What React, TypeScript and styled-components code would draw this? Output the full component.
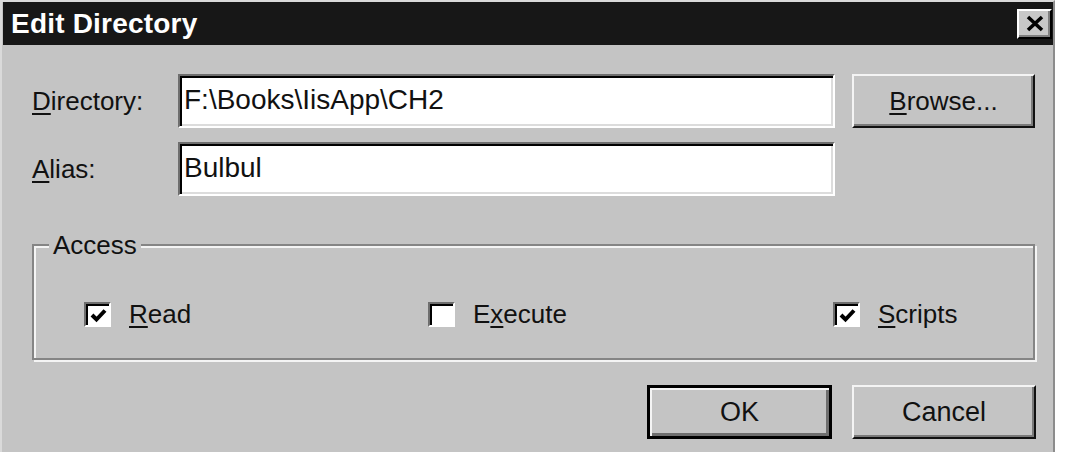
import styled, { createGlobalStyle } from "styled-components";

const GlobalStyle = createGlobalStyle`
  html, body {
    margin: 0;
    padding: 0;
    background: #ffffff;
  }
  body {
    font-family: "Liberation Sans", Arial, sans-serif;
  }
`;

const Dialog = styled.div`
  width: 1055px;
  height: 452px;
  box-sizing: border-box;
  background: #c4c4c4;
  border-top: 2px solid #dadada;
  border-left: 2px solid #dadada;
  border-right: 2px solid #8c8c8c;
  overflow: hidden;
  display: flex;
  flex-direction: column;
`;

const TitleBar = styled.div`
  height: 43px;
  flex: none;
  background: #171717;
  display: flex;
  align-items: center;
  justify-content: space-between;
  padding: 0 1px 0 8px;
  margin-left: 1px;
`;

const Title = styled.span`
  color: #ffffff;
  font-weight: bold;
  font-size: 28px;
  letter-spacing: 0.2px;
`;

const CloseButton = styled.button`
  width: 35px;
  height: 30px;
  padding: 0;
  box-sizing: border-box;
  background: #c8c8c8;
  border: 2px solid;
  border-color: #ffffff #000000 #000000 #ffffff;
  box-shadow: inset -2px -2px #808080;
  display: flex;
  align-items: center;
  justify-content: center;
`;

const Body = styled.div`
  padding: 29px 18px 0 28px;
  display: flex;
  flex-direction: column;
`;

const Form = styled.div`
  display: grid;
  row-gap: 14px;
`;

const FieldRow = styled.div`
  display: grid;
  grid-template-columns: 131px 657px 183px;
  column-gap: 17px;
  align-items: center;
  height: 54px;
`;

const Label = styled.label`
  font-size: 26px;
  color: #111111;
  padding-left: 2px;
`;

const Key = styled.u`
  text-decoration-thickness: 2px;
  text-underline-offset: 3px;
`;

const TextBox = styled.input`
  height: 54px;
  width: 100%;
  box-sizing: border-box;
  margin: 0;
  padding: 0 0 2px 4px;
  border: 2px solid;
  border-color: #6e6e6e #ffffff #ffffff #6e6e6e;
  box-shadow: inset 2px 2px #000000, inset -2px -2px #dcdcdc;
  background: #ffffff;
  font-family: "Liberation Sans", Arial, sans-serif;
  font-size: 28px;
  color: #111111;
  outline: none;
`;

const Button = styled.button<{ $default?: boolean }>`
  height: 54px;
  width: ${(p) => (p.$default ? "185px" : "184px")};
  box-sizing: border-box;
  margin: 0;
  padding: 0;
  background: #c4c4c4;
  color: #111111;
  font-family: "Liberation Sans", Arial, sans-serif;
  font-size: 27px;
  border: ${(p) => (p.$default ? "3px solid #000000" : "2px solid")};
  border-color: ${(p) =>
    p.$default ? "#000000" : "#f4f4f4 #111111 #111111 #f4f4f4"};
  box-shadow: ${(p) =>
    p.$default
      ? "inset 2px 2px #f4f4f4, inset -3px -3px #6e6e6e"
      : "inset -2px -2px #7a7a7a"};
`;

const BrowseButton = styled(Button)`
  font-size: 26px;
  width: 183px;
`;

const GroupBox = styled.fieldset`
  margin: 36px 0 0 2px;
  padding: 0 0 29px 0;
  min-width: 0;
  border: 2px solid #858585;
  box-shadow: inset 2px 2px #f4f4f4, 2px 2px #f4f4f4;
`;

const Legend = styled.legend`
  margin-left: 15px;
  padding: 0 4px;
  font-size: 26px;
  line-height: 26px;
  color: #111111;
  background: #c4c4c4;
`;

const CheckRow = styled.div`
  display: grid;
  grid-template-columns: 344px 405px auto;
  padding: 41px 0 0 50px;
`;

const CheckItem = styled.label`
  display: flex;
  align-items: center;
  gap: 18px;
  height: 30px;
  font-size: 26px;
  color: #111111;
`;

const CheckBox = styled.span`
  width: 27px;
  height: 25px;
  box-sizing: border-box;
  flex: none;
  background: #ffffff;
  border: 2px solid;
  border-color: #6e6e6e #ffffff #ffffff #6e6e6e;
  box-shadow: inset 2px 2px #000000;
  display: flex;
  align-items: center;
  justify-content: center;
  padding: 2px 0 0 2px;
`;

const ButtonRow = styled.div`
  display: flex;
  justify-content: flex-end;
  gap: 20px;
  margin-top: 25px;
  padding-right: 1px;
  margin-right: -2px;
`;

function Check({ checked }: { checked: boolean }) {
  return (
    <CheckBox>
      {checked && (
        <svg width="17" height="15" viewBox="0 0 17 15">
          <path d="M2 7 L6.5 11.5 L15 2.5" fill="none" stroke="#000" strokeWidth="4" />
        </svg>
      )}
    </CheckBox>
  );
}

const options = [
  { key: "R", rest: "ead", before: "", checked: true },
  { key: "x", rest: "ecute", before: "E", checked: false },
  { key: "S", rest: "cripts", before: "", checked: true },
];

export default function App() {
  return (
    <>
      <GlobalStyle />
      <Dialog>
        <TitleBar>
          <Title>Edit Directory</Title>
          <CloseButton aria-label="Close">
            <svg width="20" height="17" viewBox="0 0 20 17">
              <path d="M3 2 L17 15 M17 2 L3 15" stroke="#000" strokeWidth="3.6" />
            </svg>
          </CloseButton>
        </TitleBar>
        <Body>
          <Form>
            <FieldRow>
              <Label>
                <Key>D</Key>irectory:
              </Label>
              <TextBox readOnly defaultValue="F:\Books\IisApp\CH2" />
              <BrowseButton>
                <Key>B</Key>rowse...
              </BrowseButton>
            </FieldRow>
            <FieldRow>
              <Label>
                <Key>A</Key>lias:
              </Label>
              <TextBox readOnly defaultValue="Bulbul" />
            </FieldRow>
          </Form>
          <GroupBox>
            <Legend>Access</Legend>
            <CheckRow>
              {options.map((o) => (
                <CheckItem key={o.key}>
                  <Check checked={o.checked} />
                  <span>
                    {o.before}
                    <Key>{o.key}</Key>
                    {o.rest}
                  </span>
                </CheckItem>
              ))}
            </CheckRow>
          </GroupBox>
          <ButtonRow>
            <Button $default>OK</Button>
            <Button>Cancel</Button>
          </ButtonRow>
        </Body>
      </Dialog>
    </>
  );
}
